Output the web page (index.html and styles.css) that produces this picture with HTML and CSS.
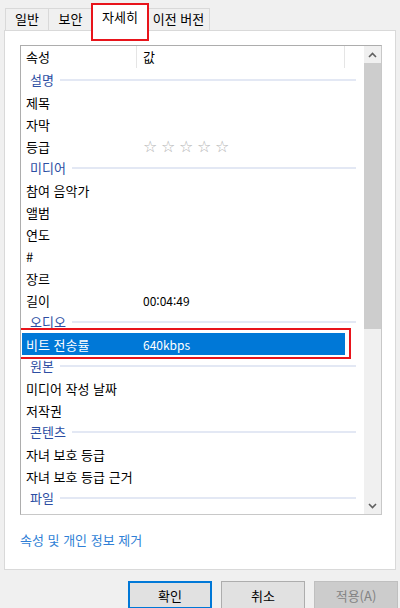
FILE: index.html
```html
<!DOCTYPE html>
<html lang="ko">
<head>
    <meta charset="UTF-8">
    <meta name="viewport" content="width=device-width, initial-scale=1.0">
    <title>속성 - 자세히</title>
    <link rel="stylesheet" href="styles.css">
</head>
<body>
    <div class="dialog">
        <div class="tabs">
            <div class="tab tab-first">일반</div>
            <div class="tab">보안</div>
            <div class="tab tab-active">자세히</div>
            <div class="tab">이전 버전</div>
        </div>
        <div class="panel">
            <div class="listbox">
                <div class="list">
                    <div class="row header">
                        <span class="name">속성</span>
                        <span class="value">값</span>
                    </div>
                    <div class="group"><span>설명</span><i></i></div>
                    <div class="row"><span class="name">제목</span><span class="value"></span></div>
                    <div class="row"><span class="name">자막</span><span class="value"></span></div>
                    <div class="row">
                        <span class="name">등급</span>
                        <span class="value stars"><b>☆</b><b>☆</b><b>☆</b><b>☆</b><b>☆</b></span>
                    </div>
                    <div class="group"><span>미디어</span><i></i></div>
                    <div class="row"><span class="name">참여 음악가</span><span class="value"></span></div>
                    <div class="row"><span class="name">앨범</span><span class="value"></span></div>
                    <div class="row"><span class="name">연도</span><span class="value"></span></div>
                    <div class="row"><span class="name">#</span><span class="value"></span></div>
                    <div class="row"><span class="name">장르</span><span class="value"></span></div>
                    <div class="row"><span class="name">길이</span><span class="value">00:04:49</span></div>
                    <div class="group"><span>오디오</span><i></i></div>
                    <div class="row selected"><span class="name">비트 전송률</span><span class="value">640kbps</span></div>
                    <div class="group"><span>원본</span><i></i></div>
                    <div class="row"><span class="name">미디어 작성 날짜</span><span class="value"></span></div>
                    <div class="row"><span class="name">저작권</span><span class="value"></span></div>
                    <div class="group"><span>콘텐츠</span><i></i></div>
                    <div class="row"><span class="name">자녀 보호 등급</span><span class="value"></span></div>
                    <div class="row"><span class="name">자녀 보호 등급 근거</span><span class="value"></span></div>
                    <div class="group"><span>파일</span><i></i></div>
                </div>
                <div class="scrollbar">
                    <div class="arrow">
                        <svg width="9" height="6" viewBox="0 0 9 6"><path d="M1 5 L4.5 1.5 L8 5" fill="none" stroke="#606060" stroke-width="1.6"/></svg>
                    </div>
                    <div class="track">
                        <div class="thumb"></div>
                    </div>
                    <div class="arrow">
                        <svg width="9" height="6" viewBox="0 0 9 6"><path d="M1 1 L4.5 4.5 L8 1" fill="none" stroke="#606060" stroke-width="1.6"/></svg>
                    </div>
                </div>
            </div>
            <a class="remove-link" href="#">속성 및 개인 정보 제거</a>
        </div>
        <div class="buttons">
            <button class="btn btn-default">확인</button>
            <button class="btn">취소</button>
            <button class="btn btn-disabled">적용(A)</button>
        </div>
    </div>
</body>
</html>
```

FILE: styles.css
```css
body {
    margin: 0;
    padding: 0;
    background-color: #f0f0f0;
    font-family: "Noto Sans CJK KR", "Noto Sans", sans-serif;
    font-size: 13px;
    color: #000;
}
.dialog {
    padding: 0 4px;
}

/* tab strip */
.tabs {
    display: flex;
    align-items: flex-end;
    height: 30px;
    padding-left: 1px;
}
.tab {
    height: 22px;
    line-height: 20px;
    border: 1px solid #d9d9d9;
    border-bottom: none;
    border-left: none;
    box-sizing: border-box;
    padding: 0;
    text-align: center;
    white-space: nowrap;
    background: #f0f0f0;
    color: #000;
}
.tab-first {
    border-left: 1px solid #d9d9d9;
}
.tab:nth-child(1),
.tab:nth-child(2) {
    width: 44px;
}
.tab:nth-child(4) {
    width: 62px;
}
.tab-active {
    position: relative;
    width: 56px;
    height: 28px;
    margin-bottom: -1px;
    line-height: 26px;
    background: #fff;
    border-left: 1px solid #d9d9d9;
    margin-left: -1px;
    z-index: 1;
}
.tab-active::after {
    content: "";
    position: absolute;
    left: -2px;
    right: -2px;
    top: -1px;
    height: 34px;
    border: 2px solid #e8141b;
}

/* white page */
.panel {
    height: 540px;
    box-sizing: border-box;
    background: #fff;
    border: 1px solid #d9d9d9;
    padding: 14px 13px 0 15px;
}
.listbox {
    display: flex;
    height: 470px;
    box-sizing: border-box;
    border: 1px solid #adadad;
    border-right-color: #c8c8c8;
    border-bottom-color: #c8c8c8;
}
.list {
    flex: 1;
    overflow: hidden;
}
.row {
    display: flex;
    align-items: center;
    height: 22px;
    width: 323px;
    margin-left: 1px;
    white-space: nowrap;
}
.row .name {
    width: 117px;
    padding-left: 4px;
}
.row .value {
    flex: 1;
    font-size: 12px;
}
.header {
    height: 22px;
    margin-bottom: 1px;
}
.header .name {
    border-right: 1px solid #e5e5e5;
    width: 110px;
    margin-right: 6px;
    height: 22px;
    line-height: 22px;
}
.header .value {
    height: 22px;
    line-height: 22px;
    font-size: 13px;
    border-right: 1px solid #e5e5e5;
}
.group {
    display: flex;
    align-items: center;
    height: 22px;
    padding-left: 9px;
    margin-right: 8px;
    color: #2c4ea3;
}
.group span {
    margin-top: -2px;
}
.group i {
    flex: 1;
    height: 2px;
    margin-left: 6px;
    background: #e3e8f4;
}
.stars b {
    display: inline-block;
    width: 18px;
    font-weight: normal;
    font-family: "DejaVu Sans", sans-serif;
    font-size: 16px;
    color: #b5b5b5;
}
.selected {
    position: relative;
    background: #0078d7;
    color: #fff;
}
.selected::after {
    content: "";
    position: absolute;
    left: -3px;
    right: -6px;
    top: -5px;
    bottom: -4px;
    border: 2px solid #e8141b;
}

/* scrollbar */
.scrollbar {
    width: 17px;
    display: flex;
    flex-direction: column;
    background: #f0f0f0;
}
.arrow {
    height: 17px;
    display: flex;
    align-items: center;
    justify-content: center;
}
.track {
    flex: 1;
}
.thumb {
    height: 266px;
    background: #cdcdcd;
}

.remove-link {
    display: block;
    margin-top: 15px;
    color: #2f7fd6;
    text-decoration: none;
    width: max-content;
}

/* dialog buttons */
.buttons {
    display: flex;
    justify-content: flex-end;
    gap: 9px;
    margin-top: 11px;
    margin-right: -2px;
}
.btn {
    width: 84px;
    height: 28px;
    font-family: "Noto Sans CJK KR", "Noto Sans", sans-serif;
    font-size: 13px;
    background: #e1e1e1;
    border: 1px solid #adadad;
    color: #000;
    padding: 0;
}
.btn-default {
    border: 2px solid #0078d7;
}
.btn-disabled {
    background: #cccccc;
    border-color: #bfbfbf;
    color: #838383;
}
```
